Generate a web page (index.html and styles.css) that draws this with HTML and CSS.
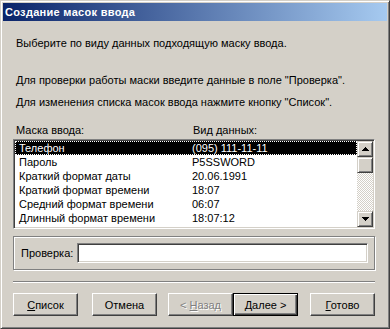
FILE: index.html
```html
<!DOCTYPE html>
<html lang="ru">
<head>
<meta charset="utf-8">
<title>Создание масок ввода</title>
<link rel="stylesheet" href="styles.css">
</head>
<body>
<div class="window">
  <div class="titlebar"><span class="title">Создание масок ввода</span></div>
  <div class="body">
    <p class="text intro">Выберите по виду данных подходящую маску ввода.</p>
    <p class="text hint1">Для проверки работы маски введите данные в поле "Проверка".</p>
    <p class="text hint2">Для изменения списка масок ввода нажмите кнопку "Список".</p>
    <div class="list-head"><span class="head-col1">Маска ввода:</span><span>Вид данных:</span></div>
    <div class="listbox">
      <div class="rows">
        <div class="row selected"><span class="c1">Телефон</span><span class="c2">(095) 111-11-11</span></div>
        <div class="row"><span class="c1">Пароль</span><span class="c2">P5SSWORD</span></div>
        <div class="row"><span class="c1">Краткий формат даты</span><span class="c2">20.06.1991</span></div>
        <div class="row"><span class="c1">Краткий формат времени</span><span class="c2">18:07</span></div>
        <div class="row"><span class="c1">Средний формат времени</span><span class="c2">06:07</span></div>
        <div class="row"><span class="c1">Длинный формат времени</span><span class="c2">18:07:12</span></div>
      </div>
      <div class="scrollbar">
        <div class="sb-btn"><svg width="7" height="4" viewBox="0 0 7 4"><path d="M3 0h1v1h1v1h1v1h1v1H0V3h1V2h1V1h1z" fill="#000"/></svg></div>
        <div class="sb-track"><div class="sb-thumb"></div></div>
        <div class="sb-btn"><svg width="7" height="4" viewBox="0 0 7 4"><path d="M0 0h7v1H6v1H5v1H4v1H3V3H2V2H1V1H0z" fill="#000"/></svg></div>
      </div>
    </div>
    <div class="group">
      <span class="check-label">Проверка:</span>
      <div class="field"></div>
    </div>
    <div class="separator"></div>
    <div class="buttons">
      <div class="btn btn-list"><span><u>С</u>писок</span></div>
      <div class="btn btn-cancel"><span>Отмена</span></div>
      <div class="btn btn-back disabled"><span>&lt; <u>Н</u>азад</span></div>
      <div class="btn btn-next default"><span><u>Д</u>алее &gt;</span></div>
      <div class="btn btn-done"><span><u>Г</u>отово</span></div>
    </div>
  </div>
</div>
</body>
</html>
```

FILE: styles.css
```css
* { box-sizing: border-box; }
html, body { margin: 0; padding: 0; background: #D4D0C8; }
body { font-family: "Liberation Sans", Arial, sans-serif; font-size: 11px; color: #000; }

.window {
  width: 390px;
  height: 329px;
  background: #D4D0C8;
  border: 1px solid;
  border-color: #D4D0C8 #404040 #404040 #D4D0C8;
  box-shadow: inset 1px 1px #fff, inset -1px -1px #808080;
  padding: 2px;
  display: flex;
  flex-direction: column;
}

.titlebar {
  height: 18px;
  background: linear-gradient(to right, #0A246A, #A6CAF0);
  display: flex;
  align-items: center;
  padding-left: 2px;
}
.title {
  color: #fff;
  font-weight: bold;
  font-size: 11px;
  line-height: 18px;
  letter-spacing: 0.3px;
}

.body {
  padding: 0 12px 0 10px;
  display: flex;
  flex-direction: column;
}

.text { margin: 0; line-height: 14px; padding-left: 3px; white-space: nowrap; }
.intro { margin-top: 15px; }
.hint1 { margin-top: 23px; }
.hint2 { margin-top: 8px; }

.list-head {
  margin-top: 14px;
  line-height: 14px;
  display: flex;
  padding-left: 3px;
}
.head-col1 { width: 177px; }

.listbox {
  margin-top: 2px;
  height: 90px;
  background: #fff;
  border: 1px solid;
  border-color: #808080 #fff #fff #808080;
  box-shadow: inset 1px 1px #404040, inset -1px -1px #D4D0C8;
  padding: 1px;
  display: flex;
}
.rows { flex: 1; }
.row {
  height: 14px;
  line-height: 14px;
  display: flex;
  padding-left: 4px;
  white-space: nowrap;
}
.row .c1 { width: 173px; }
.row.selected {
  background: #000;
  color: #fff;
  outline: 1px dotted #fff;
  outline-offset: -1px;
}

.scrollbar {
  width: 16px;
  display: flex;
  flex-direction: column;
}
.sb-btn, .sb-thumb {
  height: 16px;
  background: #D4D0C8;
  border: 1px solid;
  border-color: #D4D0C8 #404040 #404040 #D4D0C8;
  box-shadow: inset 1px 1px #fff, inset -1px -1px #808080;
  display: flex;
  align-items: center;
  justify-content: center;
}
.sb-btn svg { display: block; }
.sb-track {
  flex: 1;
  background: repeating-conic-gradient(#fff 0 25%, #D4D0C8 0 50%) 0 0 / 2px 2px;
}

.group {
  margin-top: 7px;
  height: 34px;
  border: 1px solid #808080;
  box-shadow: inset 1px 1px #fff, 1px 1px #fff;
  display: flex;
  align-items: center;
  padding: 0 6px 0 7px;
}
.check-label { width: 56px; line-height: 14px; }
.field {
  flex: 1;
  height: 20px;
  background: #fff;
  border: 1px solid;
  border-color: #808080 #fff #fff #808080;
  box-shadow: inset 1px 1px #404040, inset -1px -1px #D4D0C8;
}

.separator {
  margin-top: 11px;
  height: 2px;
  border-top: 1px solid #808080;
  border-bottom: 1px solid #fff;
}

.buttons {
  margin-top: 10px;
  display: flex;
}
.btn {
  width: 65px;
  height: 23px;
  background: #D4D0C8;
  border: 1px solid;
  border-color: #fff #404040 #404040 #fff;
  box-shadow: inset -1px -1px #808080;
  display: flex;
  align-items: center;
  justify-content: center;
  line-height: 14px;
  white-space: nowrap;
}
.btn u { text-decoration: underline; text-underline-offset: 1px; }
.btn-cancel { margin-left: 14px; }
.btn-back { margin-left: 11px; }
.btn-done { margin-left: 12px; }
.btn.default {
  border: 1px solid #000;
  box-shadow: inset 1px 1px #fff, inset -1px -1px #404040, inset -2px -2px #808080;
}
.btn.disabled { color: #808080; text-shadow: 1px 1px #fff; }
```
